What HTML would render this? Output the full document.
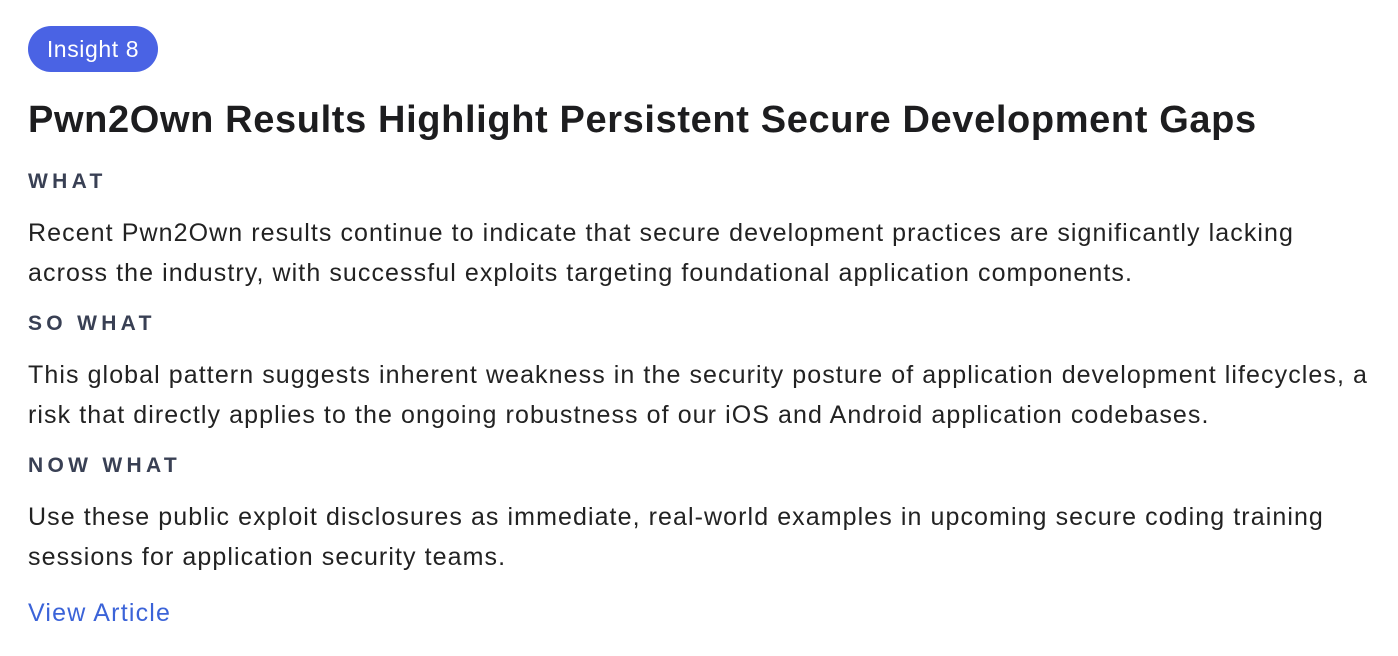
<!DOCTYPE html>
<html><head><style>
body{margin:0;background:#fff;font-family:"Liberation Sans",Arial,sans-serif;width:1398px;height:656px;overflow:hidden;position:relative;color:#1d1d1f}
.a{position:absolute;left:28px;white-space:nowrap}
.badge{top:26px;height:46px;width:130px;border-radius:23px;background:#4a63e4;color:#fff;font-size:23px;line-height:46px;text-align:center;letter-spacing:0.6px}
h1{margin:0;font-size:38px;font-weight:bold;top:98px;line-height:44px;letter-spacing:0.63px}
.h{font-size:21px;font-weight:bold;letter-spacing:4.3px;color:#394054;line-height:26px}
.p{font-size:25px;line-height:39.5px;color:#222;letter-spacing:1.08px}
.l{font-size:25px;color:#3b63d8;line-height:30px;letter-spacing:1.2px}
</style></head><body>
<div class="a badge">Insight 8</div>
<h1 class="a">Pwn2Own Results Highlight Persistent Secure Development Gaps</h1>
<div class="a h" style="top:169px">WHAT</div>
<div class="a p" style="top:214px">Recent Pwn2Own results continue to indicate that secure development practices are significantly lacking<br>across the industry, with successful exploits targeting foundational application components.</div>
<div class="a h" style="top:311px">SO WHAT</div>
<div class="a p" style="top:356px">This global pattern suggests inherent weakness in the security posture of application development lifecycles, a<br>risk that directly applies to the ongoing robustness of our iOS and Android application codebases.</div>
<div class="a h" style="top:453px">NOW WHAT</div>
<div class="a p" style="top:498px">Use these public exploit disclosures as immediate, real-world examples in upcoming secure coding training<br>sessions for application security teams.</div>
<div class="a l" style="top:598px">View Article</div>
</body></html>
